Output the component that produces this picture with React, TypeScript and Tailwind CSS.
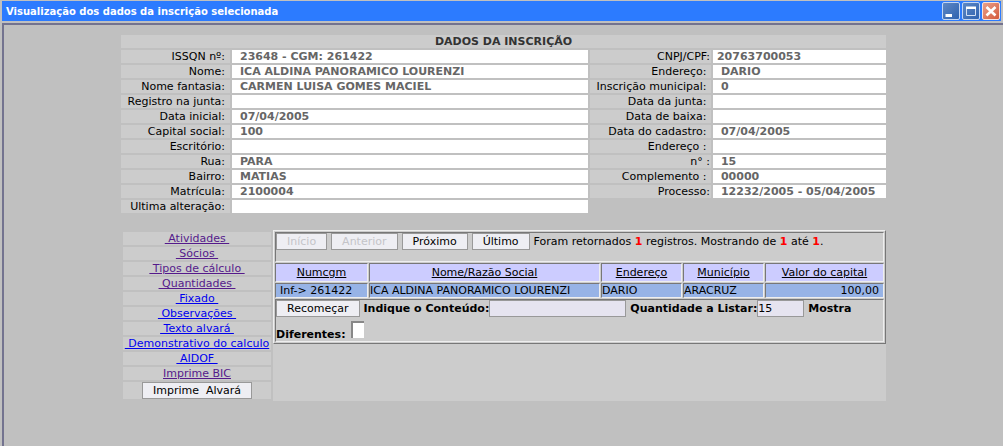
import type { ReactNode } from 'react';

type Field = { label: string; value?: string; flush?: boolean };

const leftFields: Field[] = [
  { label: 'ISSQN nº:', value: '23648 - CGM: 261422' },
  { label: 'Nome:', value: 'ICA ALDINA PANORAMICO LOURENZI' },
  { label: 'Nome fantasia:', value: 'CARMEN LUISA GOMES MACIEL' },
  { label: 'Registro na junta:' },
  { label: 'Data inicial:', value: '07/04/2005' },
  { label: 'Capital social:', value: '100' },
  { label: 'Escritório:' },
  { label: 'Rua:', value: 'PARA' },
  { label: 'Bairro:', value: 'MATIAS' },
  { label: 'Matrícula:', value: '2100004' },
  { label: 'Ultima alteração:' },
];

const rightFields: Field[] = [
  { label: 'CNPJ/CPF:', value: '20763700053', flush: true },
  { label: 'Endereço:\u00a0', value: 'DARIO' },
  { label: 'Inscrição municipal:\u00a0', value: '0' },
  { label: 'Data da junta:\u00a0' },
  { label: 'Data de baixa:\u00a0' },
  { label: 'Data do cadastro:\u00a0', value: '07/04/2005' },
  { label: 'Endereço :\u00a0' },
  { label: 'n° :', value: '15' },
  { label: 'Complemento :\u00a0', value: '00000' },
  { label: 'Processo:', value: '12232/2005 - 05/04/2005' },
];

const links = [
  { text: '\u00a0Atividades\u00a0', visited: true },
  { text: '\u00a0Sócios\u00a0', visited: true },
  { text: '\u00a0Tipos de cálculo\u00a0', visited: true },
  { text: '\u00a0Quantidades\u00a0', visited: true },
  { text: '\u00a0Fixado\u00a0', visited: false },
  { text: '\u00a0Observações\u00a0', visited: false },
  { text: '\u00a0Texto alvará\u00a0', visited: false },
  { text: '\u00a0Demonstrativo do calculo', visited: false },
  { text: '\u00a0AIDOF\u00a0', visited: false },
  { text: 'Imprime BIC', visited: true },
];

const inset = 'border border-t-[#777777] border-l-[#777777] border-b-[#eeeeee] border-r-[#eeeeee]';

function Button({ children, disabled }: { children: ReactNode; disabled?: boolean }) {
  return (
    <button
      type="button"
      disabled={disabled}
      className="h-[17px] border border-[#999999] bg-[#eeeef3] px-[10px] leading-[14px] text-black disabled:text-[#c4c4c8]"
    >
      {children}
    </button>
  );
}

function FieldCells({ field, wide }: { field: Field; wide?: boolean }) {
  return (
    <>
      <th
        scope="row"
        className={`h-[13px] bg-[#cccccc] p-0 text-right font-normal ${wide ? 'pr-[5px]' : 'pr-px'}`}
      >
        {field.label}
      </th>
      <td className={`h-[13px] bg-white p-0 font-bold text-[#666666] ${field.flush ? 'pl-1' : 'pl-2'}`}>
        {field.value}
      </td>
    </>
  );
}

function WindowButton({ label, close, children }: { label: string; close?: boolean; children: ReactNode }) {
  return (
    <button
      type="button"
      aria-label={label}
      className={`h-[18px] w-[18px] rounded-[2px] border ${
        close
          ? 'border-[#f6e4e0] bg-linear-to-br from-[#e8a08c] to-[#d4593a]'
          : 'border-[#c3d6f3] bg-linear-to-br from-[#5f88c4] to-[#2d62b0]'
      }`}
    >
      <svg viewBox="0 0 16 16" className="block h-4 w-4">
        {children}
      </svg>
    </button>
  );
}

export default function App() {
  return (
    <div className="flex min-h-screen flex-col bg-[#c0c0c0] px-0.5 pt-px font-['DejaVu_Sans','Verdana',sans-serif] text-[11px] leading-[13px] text-black">
      <header className="flex h-5 items-center justify-between bg-[#2c7bff] pr-px pl-1">
        <h1 className="text-[10px] font-bold text-white">Visualização dos dados da inscrição selecionada</h1>
        <div className="flex gap-0.5">
          <WindowButton label="Minimizar">
            <path d="M2.5 11h6.5v3H2.5z" fill="#fff" />
          </WindowButton>
          <WindowButton label="Maximizar">
            <path d="M3.5 4.5h9v8h-9z" fill="none" stroke="#d3e0f4" />
            <path d="M3 3.5h10v2.5H3z" fill="#fff" />
          </WindowButton>
          <WindowButton label="Fechar" close>
            <path d="M3.5 4l9 8.5M12.5 4l-9 8.5" stroke="#fff" strokeWidth="2.6" />
          </WindowButton>
        </div>
      </header>

      <main className="-mr-0.5 mt-0.5 flex grow flex-col items-center border-t-2 border-l-2 border-[#73738f] pt-2">
        <div className="w-[769px]">
          <table className="w-full table-fixed border-separate border-spacing-0.5">
            <colgroup>
              <col className="w-[109px]" />
              <col />
              <col className="w-[121px]" />
              <col className="w-[173px]" />
            </colgroup>
            <thead>
              <tr>
                <th colSpan={4} className="h-[13px] bg-[#cccccc] p-0 text-[#333333]">
                  DADOS DA INSCRIÇÃO
                </th>
              </tr>
            </thead>
            <tbody>
              {leftFields.map((field, i) => (
                <tr key={field.label} className="whitespace-nowrap">
                  <FieldCells field={field} wide />
                  {rightFields[i] && <FieldCells field={rightFields[i]} />}
                </tr>
              ))}
            </tbody>
          </table>

          <div className="mt-[15px] flex items-start gap-0.5 pr-0.5 pl-1">
            <nav className="flex w-[148px] shrink-0 flex-col gap-0.5 pt-0.5 text-center whitespace-nowrap">
              {links.map((link) => (
                <div key={link.text} className="flex h-[13px] justify-center bg-[#cccccc]">
                  <a href="#" className={`underline ${link.visited ? 'text-[#551a8b]' : 'text-[#0000ee]'}`}>
                    {link.text}
                  </a>
                </div>
              ))}
              <div className="flex h-[17px] justify-center bg-[#cccccc]">
                <Button>Imprime&nbsp; Alvará</Button>
              </div>
            </nav>

            <section className="min-h-[171px] grow bg-[#cccccc]">
              <table className="w-full table-fixed border-separate border-spacing-px border border-t-[#eeeeee] border-l-[#eeeeee] border-r-[#777777] border-b-[#777777]">
                <colgroup>
                  <col className="w-[93px]" />
                  <col />
                  <col className="w-[81px]" />
                  <col className="w-[81px]" />
                  <col className="w-[119px]" />
                </colgroup>
                <thead>
                  <tr>
                    <td colSpan={5} className={`h-[30px] p-0 align-top ${inset}`}>
                      <div className="flex items-center gap-1 whitespace-nowrap">
                        <Button disabled>Início</Button>
                        <Button disabled>Anterior</Button>
                        <Button>Próximo</Button>
                        <Button>Último</Button>
                        <span>
                          Foram retornados <b className="text-[#ff0000]">1</b> registros. Mostrando de{' '}
                          <b className="text-[#ff0000]">1</b> até <b className="text-[#ff0000]">1</b>.
                        </span>
                      </div>
                    </td>
                  </tr>
                  <tr>
                    {['Numcgm', 'Nome/Razão Social', 'Endereço', 'Município', 'Valor do capital'].map((title) => (
                      <th key={title} scope="col" className={`h-[19px] bg-[#ccccff] p-0 font-normal ${inset}`}>
                        <a href="#" className="underline">
                          {title}
                        </a>
                      </th>
                    ))}
                  </tr>
                </thead>
                <tbody>
                  <tr className="whitespace-nowrap">
                    <td className={`h-[15px] bg-[#97b3e6] p-0 pl-1 ${inset}`}>Inf-&gt; 261422</td>
                    <td className={`h-[15px] bg-[#97b3e6] p-0 ${inset}`}>ICA ALDINA PANORAMICO LOURENZI</td>
                    <td className={`h-[15px] bg-[#97b3e6] p-0 ${inset}`}>DARIO</td>
                    <td className={`h-[15px] bg-[#97b3e6] p-0 ${inset}`}>ARACRUZ</td>
                    <td className={`h-[15px] bg-[#97b3e6] p-0 pr-1 text-right ${inset}`}>100,00</td>
                  </tr>
                </tbody>
                <tfoot>
                  <tr>
                    <td colSpan={5} className={`h-[43px] p-0 align-top font-bold ${inset}`}>
                      <div className="flex items-center whitespace-nowrap">
                        <span className="mr-1 font-normal">
                          <Button>Recomeçar</Button>
                        </span>
                        <label htmlFor="conteudo">Indique o Conteúdo:</label>
                        <input
                          id="conteudo"
                          className="mr-1 h-[17px] w-[137px] border border-[#999999] bg-[#e6e4f0] font-normal"
                        />
                        <label htmlFor="quantidade">Quantidade a Listar:</label>
                        <input
                          id="quantidade"
                          defaultValue="15"
                          className="mr-1 h-[17px] w-[47px] border border-[#999999] bg-[#e6e4f0] font-normal"
                        />
                        <label htmlFor="diferentes">Mostra</label>
                      </div>
                      <div className="mt-1 flex items-baseline">
                        <label htmlFor="diferentes">Diferentes:</label>
                        <input
                          id="diferentes"
                          type="checkbox"
                          className="ml-[5px] h-[17px] w-[13px] appearance-none border-t-2 border-l-2 border-[#888888] bg-white"
                        />
                      </div>
                    </td>
                  </tr>
                </tfoot>
              </table>
            </section>
          </div>
        </div>
      </main>
    </div>
  );
}
